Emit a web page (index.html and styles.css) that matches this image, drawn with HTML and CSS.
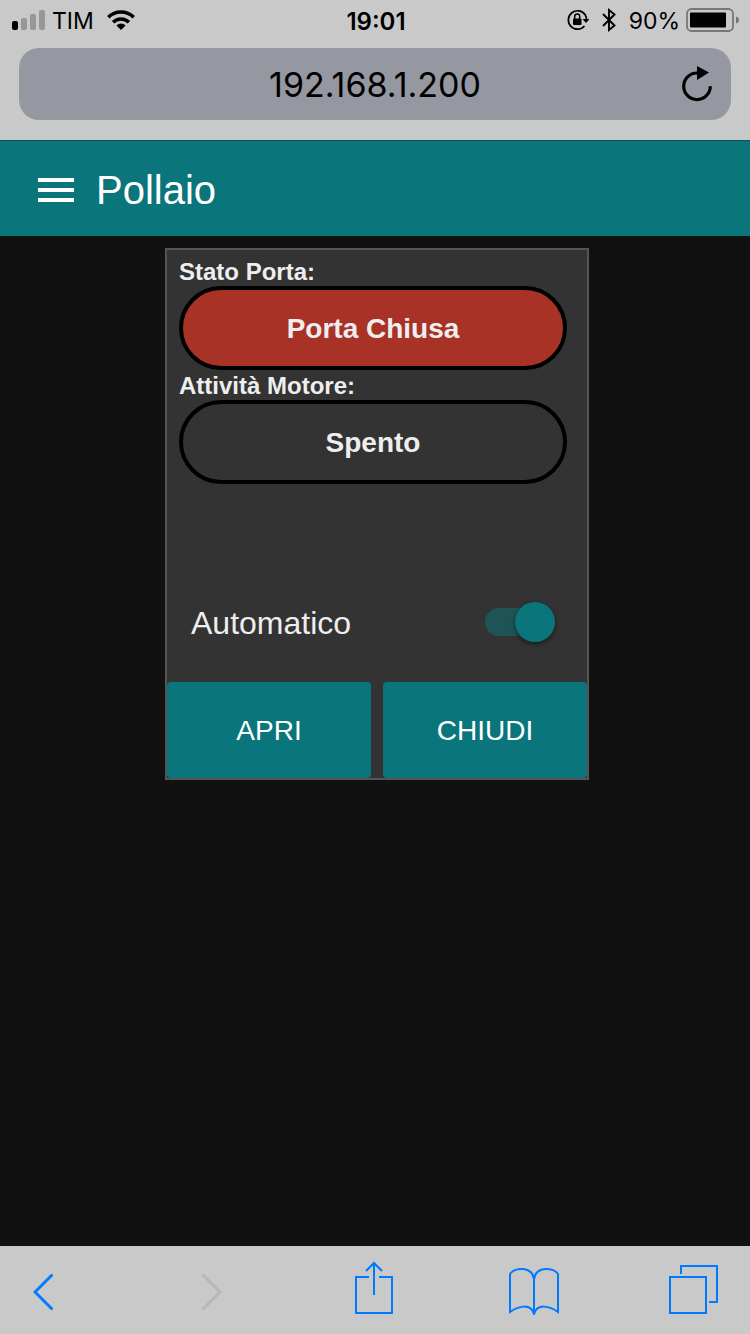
FILE: index.html
```html
<!DOCTYPE html>
<html lang="it">
<head>
<meta charset="utf-8">
<meta name="viewport" content="width=device-width, initial-scale=1">
<title>Pollaio</title>
<link rel="stylesheet" href="styles.css">
</head>
<body class="screen">
  <div class="browser-top">
    <div class="status">
      <div class="status-left">
        <svg width="34" height="20" viewBox="0 0 34 20" aria-hidden="true">
          <rect x="0" y="11" width="6" height="9" rx="2" fill="#000"/>
          <g fill="#979797">
            <rect x="9" y="8" width="6" height="12" rx="2"/>
            <rect x="18" y="4" width="6" height="16" rx="2"/>
            <rect x="27" y="0" width="6" height="20" rx="2"/>
          </g>
        </svg>
        <span class="carrier">TIM</span>
        <svg width="28" height="20" viewBox="0 0 28 20" aria-hidden="true">
          <path d="M14 20l-4.600-4.600a6.500 6.500 0 0 1 9.200 0z"/>
          <g fill="none" stroke="#000" stroke-width="3.600">
            <path d="M1.300 7.200a18.200 18.200 0 0 1 25.400 0"/>
            <path d="M6.100 12.200a11.200 11.200 0 0 1 15.800 0"/>
          </g>
        </svg>
      </div>
      <time class="clock">19:01</time>
      <div class="status-right">
        <svg width="24" height="22" viewBox="0 0 24 22" aria-hidden="true">
          <path d="M18.300 6A9.200 9.200 0 1 0 17.500 17M18.300 6Q19.500 8 19.500 11" fill="none" stroke="#000" stroke-width="1.700"/>
          <path d="M15.500 10h7L19 14z"/>
          <rect x="6" y="9.500" width="8.500" height="6.500" rx="1"/>
          <path d="M7.700 10V7.500a2.500 2.500 0 0 1 5 0V10" fill="none" stroke="#000" stroke-width="1.500"/>
        </svg>
        <svg width="16" height="24" viewBox="0 0 16 24" aria-hidden="true">
          <path d="M2 6l11.500 11.500L8 22V2l5.500 4.500L2 18" fill="none" stroke="#000" stroke-width="1.900"/>
        </svg>
        <span class="charge">90%</span>
        <svg width="54" height="24" viewBox="0 0 54 24" aria-hidden="true">
          <rect x="1" y="1" width="46" height="22" rx="4.500" fill="none" stroke="#777" stroke-width="1.800"/>
          <rect x="4" y="4.500" width="36" height="15" rx="1"/>
          <path d="M50 8.500q3 1 3 3.500t-3 3.500z" fill="#777"/>
        </svg>
      </div>
    </div>
    <div class="address">
      <span class="url">192.168.1.200</span>
      <button class="plain reload" type="button" aria-label="Ricarica">
        <svg width="32" height="38" viewBox="0 0 32 38" aria-hidden="true">
          <path d="M16 8A13.300 13.300 0 1 0 29.300 21.300" fill="none" stroke="#000" stroke-width="3.200"/>
          <path d="M16 1l12 6.500L16 15z"/>
        </svg>
      </button>
    </div>
  </div>

  <header class="app-bar">
    <button class="plain" type="button" aria-label="Menu">
      <svg width="36" height="24" viewBox="0 0 36 24" fill="#fff" aria-hidden="true">
        <path d="M0 0h36v4H0zM0 10h36v4H0zM0 20h36v4H0z"/>
      </svg>
    </button>
    <h1 class="title">Pollaio</h1>
  </header>

  <main class="page">
    <section class="card">
      <div class="states">
        <h2 class="label">Stato Porta:</h2>
        <div class="pill pill-closed">Porta Chiusa</div>
        <h2 class="label">Attività Motore:</h2>
        <div class="pill">Spento</div>
      </div>
      <div class="auto">
        <label class="auto-label" for="auto">Automatico</label>
        <input class="switch" id="auto" type="checkbox" role="switch" checked>
      </div>
      <div class="actions">
        <button class="action" type="button">APRI</button>
        <button class="action" type="button">CHIUDI</button>
      </div>
    </section>
  </main>

  <nav class="toolbar">
    <button class="plain back" type="button" aria-label="Indietro">
      <svg width="20" height="36" viewBox="0 0 20 36" aria-hidden="true"><path d="M18.500 1.500L2 18l16.500 16.500"/></svg>
    </button>
    <button class="plain forward" type="button" aria-label="Avanti" disabled>
      <svg width="20" height="36" viewBox="0 0 20 36" aria-hidden="true"><path d="M1.500 1.500L18 18 1.500 34.500"/></svg>
    </button>
    <button class="plain share" type="button" aria-label="Condividi">
      <svg width="38" height="54" viewBox="0 0 38 54" aria-hidden="true"><path d="M14 16H1v36h36V16H24M19 34V2M11 10l8-8 8 8"/></svg>
    </button>
    <button class="plain" type="button" aria-label="Preferiti">
      <svg width="50" height="54" viewBox="0 0 50 54" aria-hidden="true"><path d="M25 16v36M25 18C23 5 6 6 1 13v38C9 45 22 42 25 53 28 42 41 45 49 51V13C44 6 27 5 25 18"/></svg>
    </button>
    <button class="plain" type="button" aria-label="Pannelli">
      <svg width="50" height="54" viewBox="0 0 50 54" aria-hidden="true"><path d="M1 16h36v36H1zM12 13V5h36v36h-8"/></svg>
    </button>
  </nav>
</body>
</html>
```
FILE: styles.css
```css
* {
  box-sizing: border-box;
}

.screen {
  display: flex;
  flex-direction: column;
  min-height: 100vh;
  margin: 0;
  background: #111;
  font-family: "Liberation Sans", Arial, sans-serif;
}

svg {
  display: block;
  flex: none;
}

.plain {
  display: block;
  padding: 0;
  border: 0;
  background: none;
}

.browser-top {
  padding-bottom: 20px;
  background: #c9c9c9;
  color: #000;
  font-family: Inter, sans-serif;
}

.status {
  display: grid;
  grid-template-columns: 1fr auto 1fr;
  align-items: center;
  height: 40px;
  padding: 0 10px 0 12px;
  font-size: 23px;
}

.status-left,
.status-right {
  display: flex;
  align-items: center;
}

.status-right {
  justify-content: flex-end;
}

.carrier {
  margin: 0 13px 0 6px;
  padding-top: 2px;
}

.clock {
  padding-top: 2px;
  font-size: 24px;
  font-weight: 600;
}

.charge {
  margin: 0 6px 0 12px;
  padding-top: 2px;
}

.status-right svg + svg {
  margin-left: 10px;
}

.address {
  display: grid;
  grid-template-columns: 32px 1fr 32px;
  align-items: center;
  height: 72px;
  margin: 8px 19px 0;
  padding: 0 18px;
  border-radius: 20px;
  background: #9598a0;
}

.url {
  grid-column: 2;
  font-size: 34px;
  text-align: center;
}

.app-bar {
  display: flex;
  align-items: center;
  gap: 22px;
  height: 96px;
  padding: 3px 38px 0;
  border-top: 1px solid #0b4f53;
  background: #0a757a;
  color: #fff;
}

.title {
  margin: 0;
  font-size: 40px;
  font-weight: 400;
}

.page {
  flex: 1;
  padding: 12px 0 12px 4px;
}

.card {
  max-width: 424px;
  margin: 0 auto;
  border: 2px solid #555;
  background: #333;
  color: #eee;
}

.states {
  padding: 6px 20px 0 12px;
}

.label {
  margin: 0;
  padding-top: 2px;
  font-size: 24px;
  line-height: 28px;
}

.pill {
  padding: 21px 20px 19px;
  border: 4px solid #000;
  border-radius: 42px;
  font-size: 28px;
  font-weight: 700;
  line-height: 36px;
  text-align: center;
}

.pill-closed {
  background: #a93226;
}

.auto {
  display: flex;
  align-items: center;
  justify-content: space-between;
  margin-top: 118px;
  padding: 0 32px 40px 24px;
  font-size: 32px;
}

.auto-label {
  padding-top: 2px;
  line-height: 38px;
}

.switch {
  appearance: none;
  display: flex;
  align-items: center;
  width: 70px;
  height: 28px;
  margin: 0;
  border-radius: 14px;
  background: #1f5456;
}

.switch::before {
  content: "";
  width: 40px;
  height: 40px;
  border-radius: 50%;
  background: #999;
}

.switch:checked::before {
  margin-left: auto;
  background: #0a757a;
  box-shadow: 0 2px 5px rgba(0, 0, 0, 0.5);
}

.actions {
  display: grid;
  grid-template-columns: 1fr 1fr;
  gap: 12px;
}

.action {
  height: 96px;
  padding: 2px 0 0;
  border: 0;
  border-radius: 4px;
  background: #0a757a;
  color: #fff;
  font-family: inherit;
  font-size: 28px;
}

.toolbar {
  display: flex;
  align-items: center;
  justify-content: space-between;
  height: 88px;
  padding: 0 31px 4px 33px;
  background: #c9c9c9;
}

.toolbar path {
  fill: none;
  stroke: #007aff;
  stroke-width: 2px;
}

.toolbar .back path,
.toolbar .forward path {
  stroke-width: 3px;
  stroke-linecap: round;
}

.toolbar .forward path {
  stroke: #b7b7b7;
}

.back {
  padding: 8px 20px 0 0;
}

.forward {
  padding: 8px 12px 0 19px;
}

.share {
  padding: 0 6px 0 11px;
}
```
